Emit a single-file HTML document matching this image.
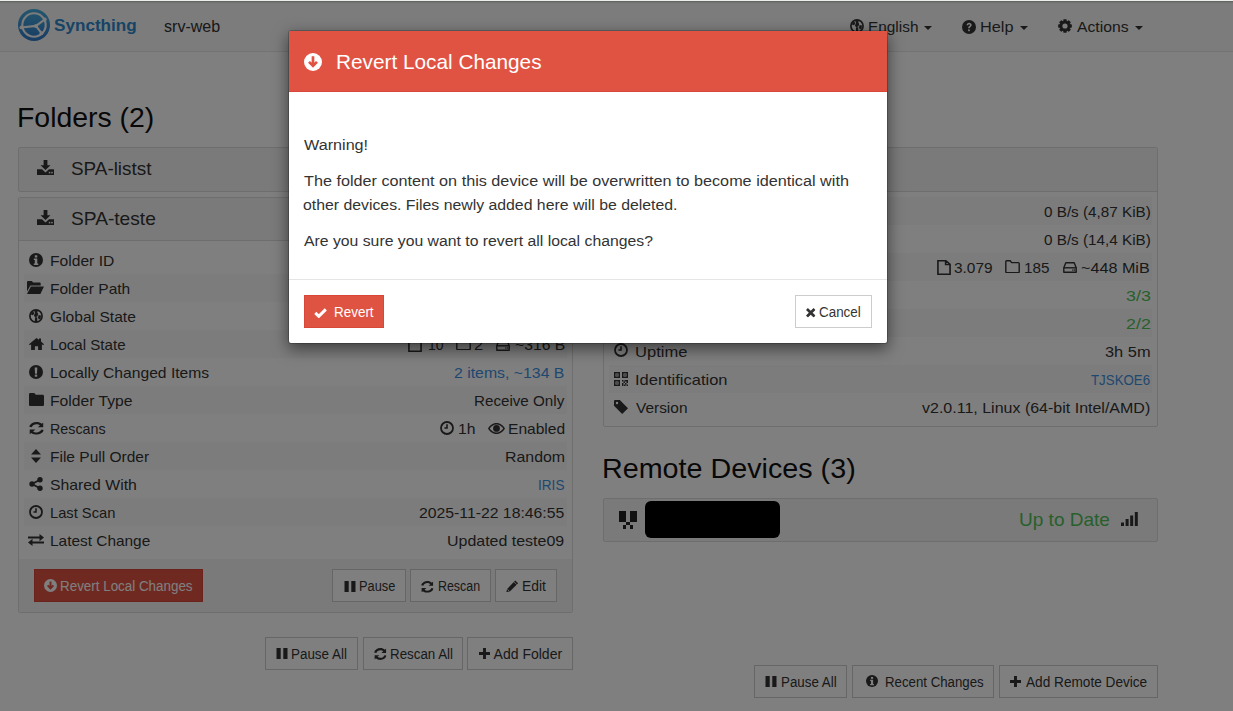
<!DOCTYPE html>
<html><head><meta charset="utf-8">
<style>
html,body{margin:0;padding:0}
body{width:1233px;height:711px;overflow:hidden;position:relative;background:#fff;font-family:"Liberation Sans",sans-serif;color:#333}
.a{position:absolute;box-sizing:border-box}
.t{position:absolute;white-space:nowrap;line-height:20px}
.ic{position:absolute;overflow:visible}
.row{position:absolute;height:28px}
.odd{background:#f9f9f9}
.btn{position:absolute;box-sizing:border-box;background:#fff;border:1px solid #ccc;border-radius:0}
</style></head><body>
<svg width="0" height="0" style="position:absolute">
<defs>
<symbol id="i-info" viewBox="0 0 14 14"><circle cx="7" cy="7" r="7" fill="currentColor"/><rect x="5.8" y="2.3" width="2.5" height="2.2" style="fill:var(--bg,#fff)"/><path d="M4.8 5.5h3.5v5h1v1.6H4.8v-1.6h1V7.1h-1z" style="fill:var(--bg,#fff)"/></symbol>
<symbol id="i-excl" viewBox="0 0 14 14"><circle cx="7" cy="7" r="7" fill="currentColor"/><path d="M5.7 2.5h2.6l-.3 6.2H6z" fill="#fff"/><rect x="5.8" y="9.6" width="2.4" height="2.1" fill="#fff"/></symbol>
<symbol id="i-qcircle" viewBox="0 0 14 14"><circle cx="7" cy="7" r="7" fill="currentColor"/><path d="M4.6 5.3c0-1.6 1.1-2.6 2.5-2.6 1.5 0 2.6 1 2.6 2.3 0 1.7-2 1.8-2 3.3H6.1c0-2 1.9-2.1 1.9-3.2 0-.5-.4-.9-.9-.9-.6 0-.9.4-1 1z" fill="#fff"/><rect x="6.1" y="9.4" width="1.7" height="1.8" fill="#fff"/></symbol>
<symbol id="i-arrowc" viewBox="0 0 14 14"><circle cx="7" cy="7" r="7" fill="currentColor"/><path d="M7 2.6v7.2M3.9 6.9L7 10l3.1-3.1" fill="none" stroke-width="2.1" stroke-linecap="butt" stroke-linejoin="miter" style="stroke:var(--bg,#fff)"/></symbol>
<symbol id="i-folderopen" viewBox="0 0 17 13"><path d="M0 1.2C0 .5.5 0 1.2 0h3.6l1.4 1.6h6.4c.7 0 1.1.5 1.1 1.1v1.7H3.4L0 10.5z" fill="currentColor"/><path d="M3.9 5.4H17l-3.6 7.6H0z" fill="currentColor"/></symbol>
<symbol id="i-folder" viewBox="0 0 15 13"><path d="M0 1.3C0 .6.6 0 1.3 0h4l1.5 1.8h6.9c.7 0 1.3.6 1.3 1.3v8.6c0 .7-.6 1.3-1.3 1.3H1.3C.6 13 0 12.4 0 11.7z" fill="currentColor"/></symbol>
<symbol id="i-globe" viewBox="0 0 14 14"><circle cx="7" cy="7" r="6.1" fill="none" stroke="currentColor" stroke-width="1.7"/><path d="M5.3 1.2h3.6L8.3 3.6l1 1.3-1 2.6-2.2.7-1.2-1.6 1-2.3z" fill="currentColor"/><path d="M6 8.2h2.2l.2 4.8H5.8z" fill="currentColor"/><path d="M2.2 3.6l2.4-.8.6 2.2-1.6 1.2-1.4-.4z" fill="currentColor"/><path d="M9.6 6l2.4.6-.4 3.2-1.8.8-.8-2z" fill="currentColor"/></symbol>
<symbol id="i-home" viewBox="0 0 15 12"><path d="M7.5 0L0 6.2l.9 1.1 1.2-1V12h3.8V8.3h3.2V12h3.8V6.3l1.2 1 .9-1.1L12 3.4V.6h-2v1.1z" fill="currentColor"/></symbol>
<symbol id="i-refresh" viewBox="0.8 0.6 12 12.8" preserveAspectRatio="none"><path d="M12.6 1.2v4.6H8l1.8-1.8C9.1 3.3 8.1 2.9 7 2.9 5.2 2.9 3.6 4.1 3.1 5.8L.9 5.3C1.7 2.5 4.1.7 7 .7c1.7 0 3.2.6 4.3 1.7zM1.4 12.8V8.2H6l-1.8 1.8c.7.7 1.7 1.1 2.8 1.1 1.8 0 3.4-1.2 3.9-2.9l2.2.5c-.8 2.8-3.2 4.6-6.1 4.6-1.7 0-3.2-.6-4.3-1.7z" fill="currentColor"/></symbol>
<symbol id="i-sort" viewBox="0 0 10 14"><path d="M5 0l5 5.6H0zM5 14l5-5.6H0z" fill="currentColor"/></symbol>
<symbol id="i-share" viewBox="0 0 14 14"><circle cx="11" cy="2.8" r="2.7" fill="currentColor"/><circle cx="11" cy="11.2" r="2.7" fill="currentColor"/><circle cx="3" cy="7" r="2.7" fill="currentColor"/><path d="M11 2.8L3 7l8 4.2" fill="none" stroke="currentColor" stroke-width="1.8"/></symbol>
<symbol id="i-clock" viewBox="0 0 14 14"><circle cx="7" cy="7" r="6" fill="none" stroke="currentColor" stroke-width="1.8"/><path d="M6.2 3.2h1.6v4.6H4.4V6.2h1.8z" fill="currentColor"/></symbol>
<symbol id="i-exchange" viewBox="0 0 16 12"><path d="M0 2.6h11.5V0L16 3.6l-4.5 3.6V4.6H0zM16 9.4H4.5V12L0 8.4l4.5-3.6v2.6H16z" fill="currentColor"/></symbol>
<symbol id="i-file" viewBox="0 0 12 15" preserveAspectRatio="none"><path d="M.8.8h6.8l3.6 3.6v9.8H.8zM7.4.8v3.8h3.8" fill="none" stroke="currentColor" stroke-width="1.4" stroke-linejoin="miter"/></symbol>
<symbol id="i-foldero" viewBox="0 0 15 13"><path d="M.8 1.6c0-.5.3-.8.8-.8h3.6l1.4 1.8h6.8c.5 0 .8.3.8.8v8.4c0 .5-.3.8-.8.8H1.6c-.5 0-.8-.3-.8-.8z" fill="none" stroke="currentColor" stroke-width="1.4"/></symbol>
<symbol id="i-hdd" viewBox="0 0 14 11"><path d="M.8 5.8L2.8.8h8.4l2 5v4.4H.8z" fill="none" stroke="currentColor" stroke-width="1.4" stroke-linejoin="round"/><path d="M.8 5.8h12.4" stroke="currentColor" stroke-width="1.4"/><rect x="9.2" y="7.4" width="1.3" height="1.3" fill="currentColor"/><rect x="11" y="7.4" width="1.3" height="1.3" fill="currentColor"/></symbol>
<symbol id="i-eye" viewBox="0 0 17 11"><path d="M8.5 0C4.6 0 1.5 2.6 0 5.5 1.5 8.4 4.6 11 8.5 11s7-2.6 8.5-5.5C15.5 2.6 12.4 0 8.5 0zm0 1.5c2.9 0 5.3 1.7 6.8 4-1.5 2.3-3.9 4-6.8 4s-5.3-1.7-6.8-4c1.5-2.3 3.9-4 6.8-4z" fill="currentColor"/><circle cx="8.5" cy="5.4" r="3.4" fill="currentColor"/></symbol>
<symbol id="i-qr" viewBox="0 0 14 14"><path d="M0 0h6v6H0zM1.5 1.5v3h3v-3zM8 0h6v6H8zm1.5 1.5v3h3v-3zM0 8h6v6H0zm1.5 1.5v3h3v-3z" fill="currentColor"/><rect x="2.3" y="2.3" width="1.4" height="1.4" fill="currentColor"/><rect x="10.3" y="2.3" width="1.4" height="1.4" fill="currentColor"/><rect x="2.3" y="10.3" width="1.4" height="1.4" fill="currentColor"/><path d="M8 8h1.5v1.5H8zM10.5 8H14v1.5h-3.5zM9.5 9.5H11V11H9.5zM8 11h1.5v3H8zM11 11h1.5v1.5H11zM12.5 12.5H14V14h-1.5zM10 12.5h1.5V14H10zM12.5 9.5H14V11h-1.5z" fill="currentColor"/></symbol>
<symbol id="i-tag" viewBox="0 0 14 14"><path d="M0 1.2C0 .5.5 0 1.2 0h4.6L14 8.2 8.2 14 0 5.8z" fill="currentColor"/><circle cx="3" cy="3" r="1.2" fill="#fff"/></symbol>
<symbol id="i-pause" viewBox="0 0 12 12"><rect x="0" y="0" width="4.6" height="12" fill="currentColor"/><rect x="7.4" y="0" width="4.6" height="12" fill="currentColor"/></symbol>
<symbol id="i-pencil" viewBox="0 0 13 13"><path d="M9.6.4l3 3-8.4 8.4-3 .8-.8-.3.8-3z" fill="currentColor"/><path d="M1.4 9.6l2 2" stroke="#fff" stroke-width=".8"/><path d="M8.2 1.8l3 3" stroke="#fff" stroke-width=".8"/></symbol>
<symbol id="i-plus" viewBox="0 0 12 12"><path d="M4.4 0h3.2v4.4H12v3.2H7.6V12H4.4V7.6H0V4.4h4.4z" fill="currentColor"/></symbol>
<symbol id="i-times" viewBox="0 0 10 10"><path d="M2 0L5 3 8 0l2 2-3 3 3 3-2 2-3-3-3 3-2-2 3-3-3-3z" fill="currentColor"/></symbol>
<symbol id="i-check" viewBox="0 0 13 10"><path d="M1.3 4.9L4.8 8.3L11.8 1.4" fill="none" stroke="currentColor" stroke-width="3" stroke-linejoin="miter" stroke-linecap="butt"/></symbol>
<symbol id="i-cog" viewBox="0 0 14 14"><path d="M5.09 2.27L5.54 0.15L8.46 0.15L8.91 2.27L8.99 2.31L10.81 1.13L12.87 3.19L11.69 5.01L11.73 5.09L13.85 5.54L13.85 8.46L11.73 8.91L11.69 8.99L12.87 10.81L10.81 12.87L8.99 11.69L8.91 11.73L8.46 13.85L5.54 13.85L5.09 11.73L5.01 11.69L3.19 12.87L1.13 10.81L2.31 8.99L2.27 8.91L0.15 8.46L0.15 5.54L2.27 5.09L2.31 5.01L1.13 3.19L3.19 1.13L5.01 2.31ZM9.6 7A2.6 2.6 0 1 0 4.4 7A2.6 2.6 0 1 0 9.6 7Z" fill="currentColor" fill-rule="evenodd"/></symbol>
<symbol id="i-dl" viewBox="0 0 17 15"><path d="M6.6 0h3.8v5.2h3.1L8.5 10 3.5 5.2h3.1z" fill="currentColor"/><path d="M0 9.3h5l3.5 3.1 3.5-3.1h5V15H0z" fill="currentColor"/><rect x="11.8" y="11.8" width="1.5" height="1.6" fill="#f5f5f5"/><rect x="14.2" y="11.8" width="1.5" height="1.6" fill="#f5f5f5"/></symbol>
<symbol id="i-signal" viewBox="0 0 17 14"><rect x="0" y="10.5" width="3" height="3.5" fill="currentColor"/><rect x="4.6" y="7" width="3" height="7" fill="currentColor"/><rect x="9.2" y="3.5" width="3" height="10.5" fill="currentColor"/><rect x="13.8" y="0" width="3" height="14" fill="currentColor"/></symbol>
</defs></svg>

<!-- ============ PAGE (under backdrop) ============ -->
<div class="a" style="left:0;top:1px;width:1233px;height:51px;background:#f8f8f8;border-bottom:1px solid #e7e7e7"></div>
<!-- logo -->
<svg class="ic" style="left:18px;top:9px" width="32" height="32" viewBox="0 0 32 32">
 <defs><linearGradient id="lg" x1="0" y1="0" x2="0" y2="1"><stop offset="0" stop-color="#46aedc"/><stop offset="1" stop-color="#3278c8"/></linearGradient></defs>
 <circle cx="16" cy="16" r="16" fill="url(#lg)"/>
 <circle cx="16" cy="16" r="11.7" fill="none" stroke="#f8f8f8" stroke-width="2.1"/>
 <path d="M3.1 18.5L18 16.9L26.9 10.4M18 16.9L23.6 24.3" fill="none" stroke="#f8f8f8" stroke-width="2.1"/>
 <circle cx="18" cy="16.9" r="2" fill="#f8f8f8"/><circle cx="3.4" cy="18.4" r="1.9" fill="#f8f8f8"/><circle cx="26.8" cy="10.5" r="1.9" fill="#f8f8f8"/><circle cx="23.5" cy="24.2" r="1.9" fill="#f8f8f8"/>
</svg>
<!-- navbar icons -->
<svg class="ic" style="left:849.5px;top:19px;color:#333" width="14" height="14"><use href="#i-globe"/></svg>
<svg class="ic" style="left:962px;top:19.5px;color:#333" width="14" height="14"><use href="#i-qcircle"/></svg>
<svg class="ic" style="left:1057.8px;top:18.9px;color:#333" width="14" height="14"><use href="#i-cog"/></svg>
<svg class="ic" style="left:924px;top:26px;" width="8" height="4"><path d="M0 0h8L4 4z" fill="#333"/></svg>
<svg class="ic" style="left:1020px;top:26px;" width="8" height="4"><path d="M0 0h8L4 4z" fill="#333"/></svg>
<svg class="ic" style="left:1135px;top:26px;" width="8" height="4"><path d="M0 0h8L4 4z" fill="#333"/></svg>

<!-- Left panel 1 -->
<div class="a" style="left:18px;top:147px;width:555px;height:45px;background:#f5f5f5;border:1px solid #ddd;border-radius:2px"></div>
<svg class="ic" style="left:37px;top:160px;color:#333" width="17" height="15"><use href="#i-dl"/></svg>
<!-- Left panel 2 -->
<div class="a" style="left:18px;top:197px;width:555px;height:416px;background:#fff;border:1px solid #ddd;border-radius:2px"></div>
<div class="a" style="left:19px;top:198px;width:553px;height:43px;background:#f5f5f5;border-bottom:1px solid #ddd;border-radius:1px 1px 0 0"></div>
<svg class="ic" style="left:37px;top:210px;color:#333" width="17" height="15"><use href="#i-dl"/></svg>
<div class="row odd" style="left:24px;top:274px;width:543px"></div>
<div class="row odd" style="left:24px;top:330px;width:543px"></div>
<div class="row odd" style="left:24px;top:386px;width:543px"></div>
<div class="row odd" style="left:24px;top:442px;width:543px"></div>
<div class="row odd" style="left:24px;top:498px;width:543px"></div>
<div class="a" style="left:19px;top:559px;width:553px;height:53px;background:#f5f5f5;border-radius:0 0 1px 1px"></div>
<!-- left icons -->
<svg class="ic" style="left:29px;top:253px;color:#333" width="14" height="14"><use href="#i-info"/></svg>
<svg class="ic" style="left:27px;top:281px;color:#333" width="17" height="13"><use href="#i-folderopen"/></svg>
<svg class="ic" style="left:29px;top:309px;color:#333" width="14" height="14"><use href="#i-globe"/></svg>
<svg class="ic" style="left:28.5px;top:338px;color:#333" width="15" height="12"><use href="#i-home"/></svg>
<svg class="ic" style="left:29px;top:365px;color:#333" width="14" height="14"><use href="#i-excl"/></svg>
<svg class="ic" style="left:28.5px;top:393px;color:#333" width="15" height="13"><use href="#i-folder"/></svg>
<svg class="ic" style="left:28.7px;top:422px;color:#333" width="14.6" height="12.8"><use href="#i-refresh"/></svg>
<svg class="ic" style="left:31px;top:449px;color:#333" width="10" height="14"><use href="#i-sort"/></svg>
<svg class="ic" style="left:29px;top:477px;color:#333" width="14" height="14"><use href="#i-share"/></svg>
<svg class="ic" style="left:29px;top:505px;color:#333" width="14" height="14"><use href="#i-clock"/></svg>
<svg class="ic" style="left:28px;top:534px;color:#333" width="16" height="12"><use href="#i-exchange"/></svg>
<!-- left value icons -->
<svg class="ic" style="left:407.7px;top:336.5px;color:#333" width="14" height="15"><use href="#i-file"/></svg>
<svg class="ic" style="left:456px;top:337px;color:#333" width="15" height="13"><use href="#i-foldero"/></svg>
<svg class="ic" style="left:496px;top:339.5px;color:#333" width="14" height="11"><use href="#i-hdd"/></svg>
<svg class="ic" style="left:440px;top:421px;color:#333" width="14" height="14"><use href="#i-clock"/></svg>
<svg class="ic" style="left:488px;top:423px;color:#333" width="17" height="11"><use href="#i-eye"/></svg>
<!-- footer buttons -->
<div class="btn" style="left:34px;top:569px;width:169px;height:33px;background:#df5343;border-color:#d9463a"></div>
<svg class="ic" style="left:44px;top:579px;color:#fff;--bg:#df5343" width="13" height="13"><use href="#i-arrowc"/></svg>
<div class="btn" style="left:332px;top:569px;width:74px;height:33px"></div>
<svg class="ic" style="left:344px;top:580.5px;color:#333" width="12" height="11"><use href="#i-pause"/></svg>
<div class="btn" style="left:410px;top:569px;width:81px;height:33px"></div>
<svg class="ic" style="left:421px;top:580.5px;color:#333" width="12.4" height="11.8"><use href="#i-refresh"/></svg>
<div class="btn" style="left:495px;top:569px;width:62px;height:33px"></div>
<svg class="ic" style="left:506px;top:580px;color:#333" width="12.5" height="12.5"><use href="#i-pencil"/></svg>
<!-- bottom folder buttons -->
<div class="btn" style="left:265px;top:637px;width:93px;height:33px"></div>
<svg class="ic" style="left:276px;top:648px;color:#333" width="12" height="11"><use href="#i-pause"/></svg>
<div class="btn" style="left:363px;top:637px;width:100px;height:33px"></div>
<svg class="ic" style="left:373.7px;top:647.8px;color:#333" width="12.4" height="12"><use href="#i-refresh"/></svg>
<div class="btn" style="left:467px;top:637px;width:106px;height:33px"></div>
<svg class="ic" style="left:478.5px;top:648px;color:#333" width="11" height="11"><use href="#i-plus"/></svg>

<!-- Right panel -->
<div class="a" style="left:603px;top:147px;width:555px;height:280px;background:#fff;border:1px solid #ddd;border-radius:2px"></div>
<div class="a" style="left:604px;top:148px;width:553px;height:44px;background:#f5f5f5;border-bottom:1px solid #ddd;border-radius:1px 1px 0 0"></div>
<div class="row odd" style="left:609px;top:197px;width:543px"></div>
<div class="row odd" style="left:609px;top:253px;width:543px"></div>
<div class="row odd" style="left:609px;top:309px;width:543px"></div>
<div class="row odd" style="left:609px;top:365px;width:543px"></div>
<svg class="ic" style="left:614px;top:343px;color:#333" width="14" height="14"><use href="#i-clock"/></svg>
<svg class="ic" style="left:614px;top:372px;color:#333" width="14" height="14"><use href="#i-qr"/></svg>
<svg class="ic" style="left:614px;top:400px;color:#333" width="14" height="14"><use href="#i-tag"/></svg>
<svg class="ic" style="left:936.5px;top:259.5px;color:#333" width="14" height="15"><use href="#i-file"/></svg>
<svg class="ic" style="left:1005px;top:259.5px;color:#333" width="15" height="13"><use href="#i-foldero"/></svg>
<svg class="ic" style="left:1063px;top:262px;color:#333" width="14" height="11"><use href="#i-hdd"/></svg>

<!-- Remote device panel -->
<div class="a" style="left:603px;top:498px;width:555px;height:44px;background:#f5f5f5;border:1px solid #ddd;border-radius:2px"></div>
<svg class="ic" style="left:619px;top:511px" width="18" height="18" viewBox="0 0 5 5" shape-rendering="crispEdges"><path d="M0 0h2v3H0zM3 0h2v3H3zM2 3h1v1H2zM1 4h1v1H1zM3 4h1v1H3z" fill="#222"/></svg>
<div class="a" style="left:645px;top:501px;width:135px;height:37px;background:#000;border-radius:6px"></div>
<svg class="ic" style="left:1121px;top:512px;color:#333" width="17" height="14"><use href="#i-signal"/></svg>

<!-- bottom device buttons -->
<div class="btn" style="left:754px;top:665px;width:93px;height:33px"></div>
<svg class="ic" style="left:765px;top:676px;color:#333" width="12" height="11"><use href="#i-pause"/></svg>
<div class="btn" style="left:852px;top:665px;width:142px;height:33px"></div>
<svg class="ic" style="left:866px;top:675px;color:#333" width="12" height="12"><use href="#i-info"/></svg>
<div class="btn" style="left:999px;top:665px;width:159px;height:33px"></div>
<svg class="ic" style="left:1010px;top:676px;color:#333" width="11" height="11"><use href="#i-plus"/></svg>

<div class="t" style="left:53.93px;top:16px;font-size:16px;font-weight:bold;color:#2f88cc;transform:scaleX(1.0693);transform-origin:0 0">Syncthing</div>
<div class="t" style="left:164.06px;top:17px;font-size:17px;font-weight:normal;color:#333;transform:scaleX(0.9448);transform-origin:0 0">srv-web</div>
<div class="t" style="left:867.67px;top:17px;font-size:15px;font-weight:normal;color:#333;transform:scaleX(1.0255);transform-origin:0 0">English</div>
<div class="t" style="left:980.31px;top:17px;font-size:15px;font-weight:normal;color:#333;transform:scaleX(1.0862);transform-origin:0 0">Help</div>
<div class="t" style="left:1076.60px;top:17px;font-size:15px;font-weight:normal;color:#333;transform:scaleX(1.0469);transform-origin:0 0">Actions</div>
<div class="t" style="left:16.77px;top:108px;font-size:28px;font-weight:normal;color:#111;transform:scaleX(1.0144);transform-origin:0 0">Folders (2)</div>
<div class="t" style="left:601.75px;top:459px;font-size:28px;font-weight:normal;color:#111;transform:scaleX(1.0254);transform-origin:0 0">Remote Devices (3)</div>
<div class="t" style="left:70.81px;top:159px;font-size:19px;font-weight:normal;color:#333;transform:scaleX(0.9938);transform-origin:0 0">SPA-listst</div>
<div class="t" style="left:70.79px;top:209px;font-size:19px;font-weight:normal;color:#333;transform:scaleX(1.0085);transform-origin:0 0">SPA-teste</div>
<div class="t" style="left:50.36px;top:251px;font-size:15px;font-weight:normal;color:#333;transform:scaleX(1.0417);transform-origin:0 0">Folder ID</div>
<div class="t" style="left:50.37px;top:279px;font-size:15px;font-weight:normal;color:#333;transform:scaleX(1.0342);transform-origin:0 0">Folder Path</div>
<div class="t" style="left:50.36px;top:307px;font-size:15px;font-weight:normal;color:#333;transform:scaleX(1.0395);transform-origin:0 0">Global State</div>
<div class="t" style="left:50.39px;top:335px;font-size:15px;font-weight:normal;color:#333;transform:scaleX(1.0068);transform-origin:0 0">Local State</div>
<div class="t" style="left:50.36px;top:363px;font-size:15px;font-weight:normal;color:#333;transform:scaleX(1.043);transform-origin:0 0">Locally Changed Items</div>
<div class="t" style="left:50.35px;top:391px;font-size:15px;font-weight:normal;color:#333;transform:scaleX(1.0455);transform-origin:0 0">Folder Type</div>
<div class="t" style="left:50.45px;top:419px;font-size:15px;font-weight:normal;color:#333;transform:scaleX(0.9526);transform-origin:0 0">Rescans</div>
<div class="t" style="left:50.37px;top:447px;font-size:15px;font-weight:normal;color:#333;transform:scaleX(1.0337);transform-origin:0 0">File Pull Order</div>
<div class="t" style="left:50.35px;top:475px;font-size:15px;font-weight:normal;color:#333;transform:scaleX(1.0519);transform-origin:0 0">Shared With</div>
<div class="t" style="left:50.42px;top:503px;font-size:15px;font-weight:normal;color:#333;transform:scaleX(0.98);transform-origin:0 0">Last Scan</div>
<div class="t" style="left:50.37px;top:531px;font-size:15px;font-weight:normal;color:#333;transform:scaleX(1.0271);transform-origin:0 0">Latest Change</div>
<div class="t" style="left:428.37px;top:335px;font-size:15px;font-weight:normal;color:#333;transform:scaleX(0.9267);transform-origin:0 0">10</div>
<div class="t" style="left:474.40px;top:335px;font-size:15px;font-weight:normal;color:#333;transform:scaleX(1.1);transform-origin:0 0">2</div>
<div class="t" style="left:514.55px;top:335px;font-size:15px;font-weight:normal;color:#333;transform:scaleX(1.0478);transform-origin:0 0">~316 B</div>
<div class="t" style="left:454.44px;top:363px;font-size:15px;font-weight:normal;color:#3f90e0;transform:scaleX(1.0553);transform-origin:0 0">2 items, ~134 B</div>
<div class="t" style="left:474.19px;top:391px;font-size:15px;font-weight:normal;color:#333;transform:scaleX(1.0114);transform-origin:0 0">Receive Only</div>
<div class="t" style="left:457.95px;top:419px;font-size:15px;font-weight:normal;color:#333;transform:scaleX(1.0467);transform-origin:0 0">1h</div>
<div class="t" style="left:508.16px;top:419px;font-size:15px;font-weight:normal;color:#333;transform:scaleX(1.0377);transform-origin:0 0">Enabled</div>
<div class="t" style="left:504.84px;top:447px;font-size:15px;font-weight:normal;color:#333;transform:scaleX(1.06);transform-origin:0 0">Random</div>
<div class="t" style="left:537.89px;top:475px;font-size:15px;font-weight:normal;color:#3f90e0;transform:scaleX(0.9071);transform-origin:0 0">IRIS</div>
<div class="t" style="left:419.15px;top:503px;font-size:15px;font-weight:normal;color:#333;transform:scaleX(1.0511);transform-origin:0 0">2025-11-22 18:46:55</div>
<div class="t" style="left:447.14px;top:531px;font-size:15px;font-weight:normal;color:#333;transform:scaleX(1.0642);transform-origin:0 0">Updated teste09</div>
<div class="t" style="left:635.20px;top:342px;font-size:15px;font-weight:normal;color:#333;transform:scaleX(1.1022);transform-origin:0 0">Uptime</div>
<div class="t" style="left:635.20px;top:370px;font-size:15px;font-weight:normal;color:#333;transform:scaleX(1.0976);transform-origin:0 0">Identification</div>
<div class="t" style="left:636.30px;top:398px;font-size:15px;font-weight:normal;color:#333;transform:scaleX(1.0286);transform-origin:0 0">Version</div>
<div class="t" style="left:1043.58px;top:202px;font-size:15px;font-weight:normal;color:#333;transform:scaleX(1.0165);transform-origin:0 0">0 B/s (4,87 KiB)</div>
<div class="t" style="left:1043.58px;top:230px;font-size:15px;font-weight:normal;color:#333;transform:scaleX(1.0165);transform-origin:0 0">0 B/s (14,4 KiB)</div>
<div class="t" style="left:954.37px;top:258px;font-size:15px;font-weight:normal;color:#333;transform:scaleX(1.0278);transform-origin:0 0">3.079</div>
<div class="t" style="left:1023.98px;top:258px;font-size:15px;font-weight:normal;color:#333;transform:scaleX(1.0167);transform-origin:0 0">185</div>
<div class="t" style="left:1081.42px;top:258px;font-size:15px;font-weight:normal;color:#333;transform:scaleX(1.0774);transform-origin:0 0">~448 MiB</div>
<div class="t" style="left:1125.51px;top:286px;font-size:15px;font-weight:normal;color:#50c058;transform:scaleX(1.1895);transform-origin:0 0">3/3</div>
<div class="t" style="left:1125.51px;top:314px;font-size:15px;font-weight:normal;color:#50c058;transform:scaleX(1.1895);transform-origin:0 0">2/2</div>
<div class="t" style="left:1104.51px;top:342px;font-size:15px;font-weight:normal;color:#333;transform:scaleX(1.0925);transform-origin:0 0">3h 5m</div>
<div class="t" style="left:1090.80px;top:370px;font-size:15px;font-weight:normal;color:#3f90e0;transform:scaleX(0.8864);transform-origin:0 0">TJSKOE6</div>
<div class="t" style="left:922.10px;top:398px;font-size:15px;font-weight:normal;color:#333;transform:scaleX(1.0667);transform-origin:0 0">v2.0.11, Linux (64-bit Intel/AMD)</div>
<div class="t" style="left:1018.98px;top:510px;font-size:18.6px;font-weight:normal;color:#50c058;transform:scaleX(1.023);transform-origin:0 0">Up to Date</div>
<div class="t" style="left:59.54px;top:576px;font-size:14px;font-weight:normal;color:#fff;transform:scaleX(0.9569);transform-origin:0 0">Revert Local Changes</div>
<div class="t" style="left:359.09px;top:576px;font-size:14px;font-weight:normal;color:#333;transform:scaleX(0.9132);transform-origin:0 0">Pause</div>
<div class="t" style="left:437.61px;top:576px;font-size:14px;font-weight:normal;color:#333;transform:scaleX(0.887);transform-origin:0 0">Rescan</div>
<div class="t" style="left:521.51px;top:576px;font-size:14px;font-weight:normal;color:#333;transform:scaleX(0.9913);transform-origin:0 0">Edit</div>
<div class="t" style="left:291.44px;top:644px;font-size:14px;font-weight:normal;color:#333;transform:scaleX(0.9579);transform-origin:0 0">Pause All</div>
<div class="t" style="left:389.55px;top:644px;font-size:14px;font-weight:normal;color:#333;transform:scaleX(0.9531);transform-origin:0 0">Rescan All</div>
<div class="t" style="left:493.60px;top:644px;font-size:14px;font-weight:normal;color:#333">Add Folder</div>
<div class="t" style="left:780.95px;top:672px;font-size:14px;font-weight:normal;color:#333;transform:scaleX(0.9526);transform-origin:0 0">Pause All</div>
<div class="t" style="left:884.55px;top:672px;font-size:14px;font-weight:normal;color:#333;transform:scaleX(0.9466);transform-origin:0 0">Recent Changes</div>
<div class="t" style="left:1025.80px;top:672px;font-size:14px;font-weight:normal;color:#333;transform:scaleX(0.9734);transform-origin:0 0">Add Remote Device</div>

<!-- ============ BACKDROP ============ -->
<div class="a" style="left:0;top:0;width:1233px;height:711px;background:rgba(0,0,0,.5)"></div>
<div class="a" style="left:0;top:0;width:1233px;height:1px;background:#eceeec"></div>
<div class="a" style="left:0;top:1px;width:1233px;height:1px;background:#636563"></div><div class="a" style="left:0;top:2px;width:1233px;height:1px;background:#737473"></div><div class="a" style="left:0;top:3px;width:1233px;height:1px;background:#797a79"></div>

<!-- ============ MODAL ============ -->
<div class="a" style="left:288px;top:30px;width:600px;height:314px;background:#fff;border:1px solid rgba(0,0,0,.2);background-clip:padding-box;border-radius:3px;box-shadow:0 5px 15px rgba(0,0,0,.5)"></div>
<div class="a" style="left:289px;top:31px;width:598px;height:61px;background:#e05343;border-bottom:1px solid #d9463a"></div>
<svg class="ic" style="left:304px;top:53px;color:#fff;--bg:#e05343" width="18" height="18"><use href="#i-arrowc"/></svg>
<div class="a" style="left:289px;top:279px;width:598px;height:1px;background:#e5e5e5"></div>
<div class="btn" style="left:304px;top:295px;width:80px;height:33px;background:#df5343;border-color:#d9463a;border-radius:0"></div>
<svg class="ic" style="left:313.8px;top:307.5px;color:#fff" width="13" height="10"><use href="#i-check"/></svg>
<div class="btn" style="left:795px;top:295px;width:77px;height:33px"></div>
<svg class="ic" style="left:806px;top:308px;color:#333" width="9.5" height="9.5"><use href="#i-times"/></svg>
<div class="t" style="left:336.02px;top:52px;font-size:21px;font-weight:normal;color:#fff;transform:scaleX(0.9893);transform-origin:0 0">Revert Local Changes</div>
<div class="t" style="left:304.00px;top:135px;font-size:15.5px;font-weight:normal;color:#333;transform:scaleX(1.0433);transform-origin:0 0">Warning!</div>
<div class="t" style="left:304.00px;top:171px;font-size:15.5px;font-weight:normal;color:#333;transform:scaleX(1.0454);transform-origin:0 0">The folder content on this device will be overwritten to become identical with</div>
<div class="t" style="left:302.98px;top:195px;font-size:15.5px;font-weight:normal;color:#333;transform:scaleX(1.0203);transform-origin:0 0">other devices. Files newly added here will be deleted.</div>
<div class="t" style="left:304.00px;top:231px;font-size:15.5px;font-weight:normal;color:#333;transform:scaleX(1.0175);transform-origin:0 0">Are you sure you want to revert all local changes?</div>
<div class="t" style="left:333.54px;top:302px;font-size:14px;font-weight:normal;color:#fff;transform:scaleX(0.96);transform-origin:0 0">Revert</div>
<div class="t" style="left:818.74px;top:302px;font-size:14px;font-weight:normal;color:#333;transform:scaleX(0.9571);transform-origin:0 0">Cancel</div>
</body></html>
